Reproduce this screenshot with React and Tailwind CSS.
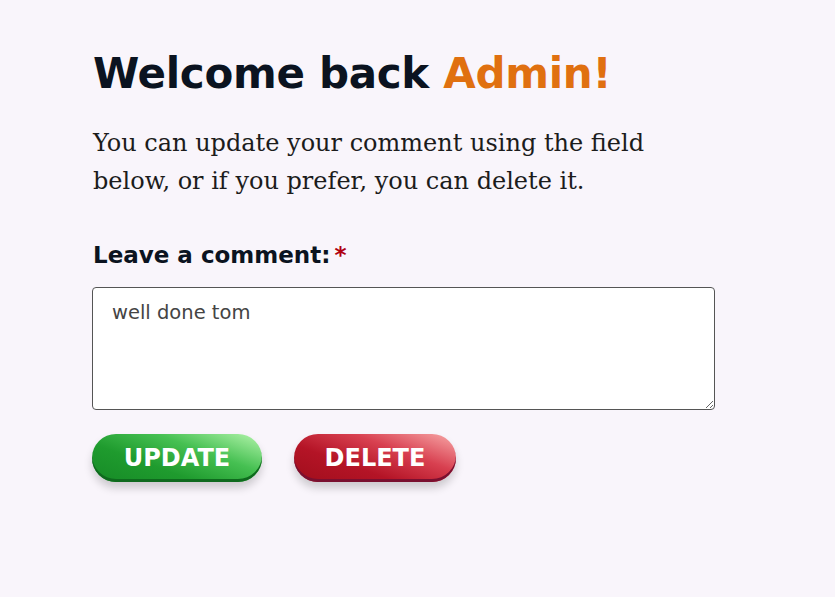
import React from "react";

export default function App() {
  return (
    <div className="min-h-[597px] w-full bg-[#f9f5fb]">
      <div className="pl-[93px] pt-[46px] w-[715px]">
        <h1 className="text-[42px] leading-[56px] font-bold text-[#0b1320] tracking-[-0.3px] [font-family:'DejaVu_Sans',sans-serif]">
          Welcome back <span className="text-[#e07010]">Admin!</span>
        </h1>
        <p className="mt-[22px] text-[24px] leading-[38px] text-[#1c1c1c] w-[590px] [font-family:'DejaVu_Serif',serif]">
          You can update your comment using the field below, or if you prefer, you can delete it.
        </p>
        <form className="mt-[42px]">
          <label className="block text-[23px] leading-[26px] font-bold text-[#0b1320] [font-family:'DejaVu_Sans',sans-serif]">
            Leave a comment:<span className="text-[#b00010] ml-[4px]">*</span>
          </label>
          <textarea
            defaultValue="well done tom"
            className="mt-[19px] block w-[623px] h-[123px] -ml-px bg-white border border-[#555] rounded-[4px] px-[19px] py-[13px] text-[19.5px] leading-[24px] text-[#444] [font-family:'DejaVu_Sans',sans-serif]"
          />
          <div className="mt-[24px] flex gap-[32px] -ml-px">
            <button
              type="button"
              className="h-[48px] w-[170px] rounded-full text-white text-[24px] font-bold [font-family:'DejaVu_Sans',sans-serif] bg-[linear-gradient(200deg,#b4f5ac_0%,#46c052_35%,#1f9b2e_65%,#168a26_100%)] shadow-[inset_0_-3px_0_#0f6a1e,0_6px_8px_rgba(0,0,0,0.18)]"
            >
              UPDATE
            </button>
            <button
              type="button"
              className="h-[48px] w-[162px] rounded-full text-white text-[24px] font-bold [font-family:'DejaVu_Sans',sans-serif] bg-[linear-gradient(200deg,#f8a8a8_0%,#d84050_35%,#b41426_65%,#a00e1c_100%)] shadow-[inset_0_-3px_0_#7a1030,0_6px_8px_rgba(0,0,0,0.18)]"
            >
              DELETE
            </button>
          </div>
        </form>
      </div>
    </div>
  );
}
